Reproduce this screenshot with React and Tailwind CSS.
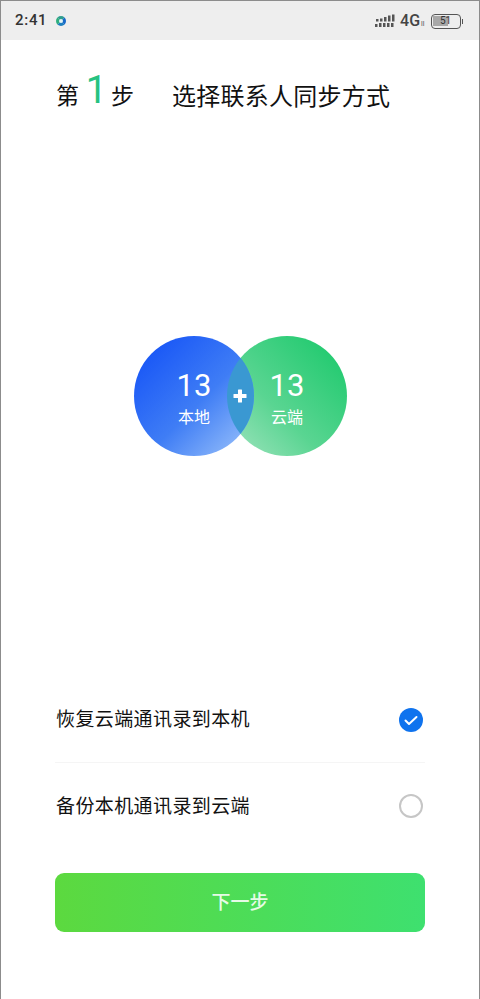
export default function App() {
  const cjk = "font-['Roboto','Noto_Sans_CJK_SC',sans-serif]";
  return (
    <div className={`${cjk} w-[480px] h-[999px] bg-white border-x border-t border-[#8c8c8c] flex flex-col overflow-hidden`}>
      <div className="h-[39px] bg-[#eeeeee] flex items-center pl-[14px] shrink-0 relative">
        <div className="flex items-center gap-[9px]">
          <span className="text-[15px] font-medium text-[#333] tracking-[0.7px]">2:41</span>
          <span className="w-[10px] h-[10px] rounded-full border-[3px] border-l-[#2fae7f] border-t-[#2f9d8f] border-r-[#1769c9] border-b-[#1d7fc0] bg-[#e4f4f4]" />
        </div>
        <div className="flex items-center absolute right-[16px] top-[12px]">
          <svg width="20" height="14" viewBox="0 0 20 14" fill="#555" className="mr-[5px]">
            <rect x="1" y="5" width="2.500" height="2.500" /><rect x="5" y="4.500" width="2.500" height="3" />
            <rect x="9" y="3" width="2.500" height="4.500" /><rect x="13" y="1.500" width="2.500" height="6" />
            <rect x="17" y="0.500" width="2.500" height="7" />
            <rect x="0" y="10" width="2.500" height="3" /><rect x="4" y="9" width="2.500" height="4" />
            <rect x="8" y="9" width="2.500" height="4" /><rect x="12" y="9" width="2.500" height="4" />
            <rect x="16" y="9" width="2.500" height="4" />
          </svg>
          <span className="text-[16px] font-medium text-[#444] leading-none">4G</span>
          <span className="text-[7px] text-[#555] ml-[1px] mt-[6px] leading-none mr-[6px]">ll</span>
          <div className="w-[30px] h-[15px] rounded-[4px] border-[1.5px] border-[#555] relative overflow-hidden flex items-center justify-center p-[1px]">
            <div className="absolute left-[1.5px] top-[1.5px] bottom-[1.5px] w-[15px] bg-[#a8a8a8]" />
            <span className="relative text-[10px] text-[#333] leading-none">51</span>
          </div>
          <div className="w-[1.500px] h-[5px] bg-[#555] ml-[1px]" />
        </div>
      </div>

      <div className="flex items-end pl-[55px] h-[46px] mt-[26px] shrink-0">
        <span className="text-[23px] leading-[30px] text-[#111]">第</span>
        <span className="text-[38px] leading-[44px] text-[#26c281] w-[32px] text-center pl-[3px]">1</span>
        <span className="text-[23px] leading-[30px] text-[#111]">步</span>
        <span className="text-[24px] leading-[30px] text-[#111] ml-[38px] tracking-[0.25px]">选择联系人同步方式</span>
      </div>

      <div className="h-[224px] shrink-0" />

      <div className="relative w-[213px] h-[120px] ml-[133px] shrink-0">
        <div className="absolute right-0 top-0 w-[120px] h-[120px] rounded-full bg-[linear-gradient(45deg,#a2e4c0_0%,#5ad592_40%,#16c868_100%)]" />
        <div className="absolute left-0 top-0 w-[120px] h-[120px] rounded-full overflow-hidden bg-[linear-gradient(135deg,#0f4df7_0%,#3f7df5_55%,#a2c8fb_100%)]">
          <div className="absolute left-[93px] top-0 w-[120px] h-[120px] rounded-full bg-[#3a98d2]" />
        </div>
        <div className="absolute left-0 top-[32px] w-[120px] text-center text-white">
          <div className="text-[31px] leading-[36px]">13</div>
          <div className="text-[16px] leading-[20px] mt-[4px]">本地</div>
        </div>
        <div className="absolute left-[93px] top-[32px] w-[120px] text-center text-white">
          <div className="text-[31px] leading-[36px]">13</div>
          <div className="text-[16px] leading-[20px] mt-[4px]">云端</div>
        </div>
        <span className="absolute left-[99px] top-[53px] w-[14px] h-[14px] flex items-center justify-center">
          <svg width="14" height="14" viewBox="0 0 14 14" fill="white"><rect x="0.500" y="5" width="13" height="4" rx="0.500" /><rect x="5" y="0.500" width="4" height="13" rx="0.500" /></svg>
        </span>
      </div>

      <div className="flex-1" />

      <div className="mx-[54px] flex flex-col">
        <div className="flex items-center justify-between h-[87px] border-b border-[#f5f5f5] pl-[1px] pt-[2px]">
          <span className="text-[19px] text-[#111] tracking-[0.4px] pt-[1px]">恢复云端通讯录到本机</span>
          <span className="w-[24px] h-[24px] rounded-full bg-[#0f73ee] flex items-center justify-center mr-[2px]">
            <svg width="14" height="11" viewBox="0 0 14 11" fill="none" stroke="white" strokeWidth="2" strokeLinecap="round" strokeLinejoin="round"><path d="M1.500 5.500 L5 9 L12.500 2" /></svg>
          </span>
        </div>
        <div className="flex items-center justify-between h-[86px] pl-[1px]">
          <span className="text-[19px] text-[#111] tracking-[0.4px] pt-[2px]">备份本机通讯录到云端</span>
          <span className="w-[24px] h-[24px] rounded-full border-2 border-[#c6c6c6] mr-[2px]" />
        </div>
        <button className="h-[59px] mt-[24px] pt-[1px] rounded-[9px] bg-[linear-gradient(90deg,#5cd93f,#3ee06f)] text-[#e6fbe6] text-[19px] flex items-center justify-center font-medium">
          下一步
        </button>
      </div>
      <div className="h-[67px] shrink-0" />
    </div>
  );
}
